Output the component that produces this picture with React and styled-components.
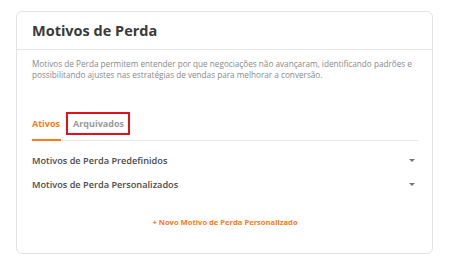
import React, { useState } from 'react'
import styled, { createGlobalStyle } from 'styled-components'

const GlobalStyle = createGlobalStyle`
  html, body {
    margin: 0;
    padding: 0;
    background: #ffffff;
    font-family: "Open Sans", "Noto Sans", sans-serif;
  }
`

const Page = styled.div`
  padding: 11px 17px 12px 16px;
`

const Card = styled.section`
  border: 1px solid #e2e2e2;
  border-radius: 6px;
  height: 241px;
  display: flex;
  flex-direction: column;
`

const Header = styled.header`
  height: 37px;
  display: flex;
  align-items: center;
  padding: 0 15px;
  border-bottom: 1px solid #e6e6e6;
`

const Title = styled.h1`
  margin: 0;
  font-size: 14.5px;
  font-weight: 700;
  color: #3a3a3a;
`

const Body = styled.div`
  padding: 8px 14px 0 15px;
  display: flex;
  flex-direction: column;
`

const Description = styled.p`
  margin: 0;
  font-size: 8.2px;
  line-height: 11px;
  color: #8a8a8a;
`

const Tabs = styled.div`
  margin-top: 32px;
  display: flex;
  align-items: flex-end;
  gap: 6px;
  border-bottom: 1px solid #e8e8e8;
`

const Tab = styled.button`
  box-sizing: border-box;
  background: none;
  border: 2px solid ${p => (p.$marked ? '#e0121b' : 'transparent')};
  padding: 0 4px 0 5px;
  height: 23px;
  margin-bottom: 5px;
  font-family: inherit;
  font-size: 9px;
  font-weight: 700;
  color: ${p => (p.$active ? '#ff7a1a' : '#9a9a9a')};
  cursor: pointer;
  position: relative;

  &::after {
    content: '';
    display: ${p => (p.$active ? 'block' : 'none')};
    position: absolute;
    left: 0;
    right: -1px;
    bottom: -8px;
    height: 2px;
    background: #ff7a1a;
  }
`

const FirstTab = styled(Tab)`
  padding: 0;
  border-left: 0;
  border-right: 0;
`

const Rows = styled.div`
  margin-top: 7px;
`

const Row = styled.div`
  display: flex;
  align-items: center;
  justify-content: space-between;
  height: 24px;
  font-size: 9.2px;
  font-weight: 600;
  color: #4a4a4a;
`

const Caret = styled.span`
  width: 0;
  height: 0;
  border-left: 3px solid transparent;
  border-right: 3px solid transparent;
  border-top: 3px solid #777;
  margin-right: 3px;
`

const AddButton = styled.button`
  align-self: center;
  margin-top: 20px;
  background: none;
  border: 0;
  font-family: inherit;
  font-size: 7.6px;
  font-weight: 700;
  color: #ff7a1a;
  cursor: pointer;
`

const App = () => {
  const [tab, setTab] = useState('ativos')
  return (
    <>
      <GlobalStyle />
      <Page>
        <Card>
          <Header>
            <Title>Motivos de Perda</Title>
          </Header>
          <Body>
            <Description>
              Motivos de Perda permitem entender por que negociações não avançaram, identificando padrões e
              possibilitando ajustes nas estratégias de vendas para melhorar a conversão.
            </Description>
            <Tabs>
              <FirstTab $active={tab === 'ativos'} onClick={() => setTab('ativos')}>Ativos</FirstTab>
              <Tab $marked $active={tab === 'arquivados'} onClick={() => setTab('arquivados')}>Arquivados</Tab>
            </Tabs>
            <Rows>
              <Row>Motivos de Perda Predefinidos<Caret /></Row>
              <Row>Motivos de Perda Personalizados<Caret /></Row>
            </Rows>
            <AddButton>+ Novo Motivo de Perda Personalizado</AddButton>
          </Body>
        </Card>
      </Page>
    </>
  )
}

export default App
